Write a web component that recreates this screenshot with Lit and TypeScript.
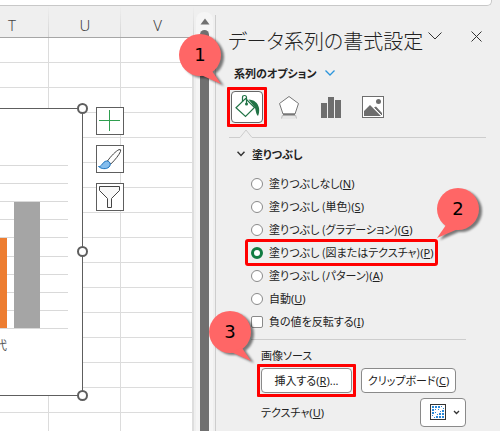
import { LitElement, html, css, svg } from "lit";
import { customElement, property, state } from "lit/decorators.js";
import { classMap } from "lit/directives/class-map.js";

const COLUMNS = ["T", "U", "V"];
const ROWS = 16;

const FILLS: { text: string; key: string }[] = [
  { text: "塗りつぶしなし", key: "N" },
  { text: "塗りつぶし (単色)", key: "S" },
  { text: "塗りつぶし (グラデーション)", key: "G" },
  { text: "塗りつぶし (図またはテクスチャ)", key: "P" },
  { text: "塗りつぶし (パターン)", key: "A" },
  { text: "自動", key: "U" },
];

// Texture swatch: x, y and side of each dot.
const DOTS: [number, number, number][] = [
  [0, 0, 2], [3, 0, 2], [0, 3, 2], [3, 3, 1], [6, 0, 2], [9, 0, 1], [0, 6, 2], [0, 9, 1], [6, 3, 1], [3, 6, 1],
  [10, 10, 2], [7, 10, 2], [4, 10, 2], [10, 7, 2], [7, 7, 2], [10, 4, 2], [2, 11, 1], [11, 2, 1], [5, 8, 1], [8, 5, 1],
];

@customElement("step-callout")
export class StepCallout extends LitElement {
  @property() label = "";
  @property() tail: "right" | "left" = "right";

  static styles = css`
    :host { display: block; width: 56px; height: 62px; pointer-events: none; }
    svg { display: block; }
    .bubble { fill: #ff6666; filter: drop-shadow(3px 2px 1px rgba(0, 0, 0, 0.5)); }
    text { font: 18px "DejaVu Sans", sans-serif; fill: #000; }
  `;

  render() {
    const tip = this.tail === "right"
      ? svg`<path d="M23 42 L43 51 L34 38 Z" />`
      : svg`<path d="M10 38 L1 51 L22 42 Z" />`;
    return html`<svg width="56" height="62" viewBox="0 0 56 62" aria-hidden="true">
      <g class="bubble"><circle cx="22" cy="22" r="21" />${tip}</g>
      <text x="22" y="28" text-anchor="middle">${this.label}</text>
    </svg>`;
  }
}

@customElement("sheet-view")
export class SheetView extends LitElement {
  static styles = css`
    :host {
      display: block; position: relative; overflow: hidden; flex: none; width: 194px;
      background: #fff; font-family: "Noto Sans CJK JP", sans-serif;
    }
    .grid {
      display: grid; height: 100%;
      grid-template-columns: 49px 72px 73px;
      grid-template-rows: 32px repeat(15, 25px) minmax(0, 1fr);
    }
    .head {
      display: flex; align-items: center; justify-content: center; box-sizing: border-box;
      padding-top: 6px;
      background: linear-gradient(#efefef, #d4d4d4) right / 1px 100% no-repeat #efefef;
      border-bottom: 1px solid #a6a6a6;
      font: 300 15px "Noto Sans", "Noto Sans CJK JP", sans-serif; color: #444;
    }
    .head.first { justify-content: flex-start; padding-left: 8px; }
    .cell { box-sizing: border-box; border-right: 1px solid #dcdcdc; border-bottom: 1px solid #dcdcdc; }
    .cell.edge { border-right: 2px solid #dedede; }
    .cell.last { border-bottom: 0; }
    .chart { position: absolute; left: 0; top: 102px; }
    .category { font: 12px "Noto Sans CJK JP", sans-serif; fill: #595959; }
    .tools { position: absolute; left: 96px; top: 101px; display: flex; flex-direction: column; gap: 10px; }
    .tool {
      width: 28px; height: 28px; padding: 0; box-sizing: border-box;
      background: #fff; border: 1px solid #5e5e5e;
    }
    .tool svg { display: block; }
  `;

  render() {
    const lines = Array.from({ length: 10 }, (_, i) => 57.5 + i * 18 + (i > 4 ? 1 : 0));
    return html`
      <div class="grid">
        ${COLUMNS.map((c, i) => html`<div class=${classMap({ head: true, first: i === 0 })}>${c}</div>`)}
        ${Array.from({ length: ROWS }, (_, r) => COLUMNS.map((_c, i) => html`
          <div class=${classMap({ cell: true, edge: i === 2, last: r === ROWS - 1 })}></div>`))}
      </div>
      <svg class="chart" width="84" height="288" viewBox="0 0 84 288" role="img" aria-label="グラフ">
        <path d="M-1 .5H82.500V287.500H-1Z" fill="#fff" stroke="#5e5e5e" />
        ${lines.map((y) => svg`<path d="M0 ${y}H68" stroke="#d9d9d9" />`)}
        <rect x="0" y="130" width="7" height="90" fill="#ed7d31" />
        <rect x="14" y="94" width="26" height="126" fill="#a5a5a5" />
        <text class="category" x="-5" y="242">代</text>
      </svg>
      <div class="tools">
        <button class="tool" aria-label="グラフ要素">
          <svg width="26" height="26" viewBox="0 0 26 26"><path d="M12.500 2v21M2 12.500h21" stroke="#2f9e4f" /></svg>
        </button>
        <button class="tool" aria-label="グラフ スタイル">
          <svg width="26" height="26" viewBox="0 0 26 26">
            <path d="M10.500 15 C14 10 19 5 22 3.600 Q24.500 3 23.500 5.500 C22 9 18 14 13.800 18 Z" fill="#fff" stroke="#444" />
            <path d="M1.500 20.500 C5 21 5.500 15.500 9.500 15 C13 15 14.500 18.500 12 21 C9.500 23.500 4 23 1.500 20.500Z" fill="#83bdee" stroke="#1a72bd" />
          </svg>
        </button>
        <button class="tool" aria-label="グラフ フィルター">
          <svg width="26" height="26" viewBox="0 0 26 26"><path d="M2.500 2.500h20v4l-8 8v9h-4v-9l-8-8z" fill="#f8f8f8" stroke="#444" /></svg>
        </button>
      </div>`;
  }
}

@customElement("app-root")
export class AppRoot extends LitElement {
  @state() private selected = 3;

  static styles = css`
    :host {
      display: flex; flex-direction: column; position: relative; overflow: hidden;
      min-height: 100vh; background: #efefef; color: #222;
      font: 11px/20px "Noto Sans CJK JP", sans-serif; font-feature-settings: "palt";
    }
    .formula {
      flex: none; height: 6px; box-sizing: border-box; margin-right: 8px; background: #fff;
      border: solid #c8c8c8; border-width: 0 1px 1px 0; border-radius: 0 0 5px 0;
    }
    .main { display: flex; flex: 1; }
    .scroll {
      flex: none; width: 21px; box-sizing: border-box; padding: 6px 2px 0; display: flex;
    }
    .track {
      flex: 1; display: flex; flex-direction: column; align-items: center; gap: 5px;
      background: #f5f5f5; border-radius: 8px 8px 0 0; padding-top: 6px;
    }
    .thumb { flex: 1; width: 9px; border-radius: 5px 5px 0 0; background: #707070; }
    .pane { flex: 1; min-width: 0; display: flex; flex-direction: column; margin-top: 9px; padding-top: 6px; border-left: 1px solid #cdcdcd; }
    svg { display: block; flex: none; }
    button { font: inherit; font-feature-settings: inherit; color: inherit; padding: 0; }
    .bare { background: none; border: 0; }
    .titlebar { display: flex; align-items: center; height: 40px; padding: 0 18px 0 12px; }
    h1 { margin: 0; font-size: 20px; font-weight: 300; line-height: 40px; white-space: nowrap; }
    .menu { margin-left: 5px; margin-bottom: 10px; }
    .close { margin-left: auto; margin-bottom: 10px; }
    .scope { display: flex; align-items: center; gap: 8px; height: 24px; margin-left: 18px; font-weight: 700; }
    .tabs { display: flex; align-items: center; gap: 10px; margin: 6px 0 0 15px; }
    .tab { width: 32px; height: 32px; box-sizing: border-box; display: flex; align-items: center; justify-content: center; }
    .tab.on { background: #fff; border: 1px solid #666; border-radius: 4px; }
    .marked { position: relative; }
    .marked::after { content: ""; position: absolute; inset: -5px; border: 3px solid #f00; border-radius: 1px; pointer-events: none; }
    .rule { display: flex; margin: 6px 14px 0 13px; height: 9px; }
    .rule i { box-sizing: border-box; border-bottom: 1px solid #cdcdcd; }
    .rule .before { width: 11px; }
    .rule .after { flex: 1; }
    h2 { display: flex; align-items: center; gap: 7px; margin: 6px 0 0 21px; font-size: 11px; line-height: 20px; font-weight: 700; }
    .fills { margin: 8px 0 0 35px; padding: 0; border: 0; display: flex; flex-direction: column; align-items: flex-start; }
    .choice { display: flex; align-items: center; gap: 6px; height: 23px; white-space: nowrap; }
    .choice.boxed { margin: 0 -4px; padding: 0 2px 0 4px; outline: 3px solid #f00; outline-offset: -1px; border-radius: 1px; z-index: 1; }
    .key { font-family: "Noto Sans", sans-serif; }
    input { appearance: none; box-sizing: border-box; flex: none; width: 12px; height: 12px; margin: 0; background: #fff; border: 1px solid #8a8a8a; }
    input[type="radio"] { border-radius: 50%; }
    input[type="radio"]:checked { border: 3px solid #107c41; }
    input[type="checkbox"] { border-radius: 2px; }
    .source { margin: 6px 34px 0 35px; border-top: 1px solid #cdcdcd; padding: 5px 0 0 10px; }
    .caption { margin: 0; line-height: 20px; }
    .buttons { display: flex; gap: 9px; margin-top: 3px; }
    .push { height: 25px; box-sizing: border-box; background: #fff; border: 1px solid #8a8a8a; border-radius: 4px; white-space: nowrap; }
    .insert { width: 91px; }
    .clip { width: 95px; }
    .texture { display: flex; align-items: center; justify-content: space-between; margin-top: 5px; }
    .picker { position: relative; width: 46px; height: 29px; }
    .picker select { appearance: none; width: 100%; height: 100%; margin: 0; background: #fff; border: 1px solid #8a8a8a; border-radius: 4px; }
    .picker svg { position: absolute; inset: 0; pointer-events: none; }
    .handle { position: absolute; left: 77px; width: 11px; height: 11px; box-sizing: border-box; border: 2px solid #5e5e5e; border-radius: 50%; background: #fff; }
    .handle.top { top: 103px; }
    .handle.middle { top: 246px; }
    .handle.bottom { top: 390px; }
    step-callout { position: absolute; z-index: 2; }
    .one { left: 178px; top: 33px; }
    .two { left: 436px; top: 187px; }
    .three { left: 208px; top: 310px; }
  `;

  private key(k: string) {
    return html`<span class="key">(<u>${k}</u>)</span>`;
  }

  render() {
    return html`
      <div class="formula"></div>
      <div class="main">
        <sheet-view></sheet-view>
        <div class="scroll"><div class="track">
          <svg width="10" height="7" viewBox="0 0 10 7"><path d="M5 .5 9.500 6.500H.5Z" fill="#707070" /></svg>
          <div class="thumb"></div>
        </div></div>
        <aside class="pane">
          <div class="titlebar">
            <h1>データ系列の書式設定</h1>
            <button class="bare menu" aria-label="作業ウィンドウ オプション">
              <svg width="14" height="8" viewBox="0 0 14 8"><path d="M.5.5 7 7 13.500.5" fill="none" stroke="#333" /></svg>
            </button>
            <button class="bare close" aria-label="閉じる">
              <svg width="11" height="11" viewBox="0 0 11 11"><path d="M.5.5l10 10M10.500.5l-10 10" stroke="#333" /></svg>
            </button>
          </div>
          <div class="scope">系列のオプション
            <svg width="10" height="6" viewBox="0 0 10 6"><path d="M.5.5 5 5 9.500.5" fill="none" stroke="#2b95dc" stroke-width="1.300" /></svg>
          </div>
          <div class="tabs">
            <button class="tab on marked" aria-label="塗りつぶしと線">
              <svg width="26" height="26" viewBox="0 0 26 26">
                <path d="M11.500 4.500 20.500 13.500 11.500 22.500 2 13.700Z" fill="#fff" stroke="#217346" stroke-width="1.200" />
                <path d="M8.500 8V3.500q0-2 2-2t2 2V10" fill="none" stroke="#217346" stroke-width="1.200" />
                <circle cx="12.500" cy="10" r="1.500" fill="#217346" />
                <path d="M14.500 5.500C20 5.500 24 9 25 14C25.500 17 25 20 24 22C21.500 20 22 15 20.500 13Z" fill="#217346" />
              </svg>
            </button>
            <button class="tab bare" aria-label="効果">
              <svg width="22" height="26" viewBox="0 0 22 26">
                <path d="M4.500 21h13v4h-14z" fill="#e6e6e6" /><path d="M4.500 21 3.500 24.500M17.500 21l1 3.500" stroke="#bbb" />
                <path d="M11 2.500 20.500 9.500 17 20H5L1.500 9.500Z" fill="#fff" stroke="#777" />
                <path d="M5 20.500h12" stroke="#777" stroke-width="2" />
              </svg>
            </button>
            <button class="tab bare" aria-label="系列のオプション">
              <svg width="20" height="22" viewBox="0 0 20 22"><path d="M0 7h6v15H0zM7 1h6v21H7zM14 4h6v18h-6z" fill="#6e6e6e" /></svg>
            </button>
            <button class="tab bare" aria-label="図">
              <svg width="22" height="22" viewBox="0 0 22 22">
                <rect x=".5" y=".5" width="21" height="21" fill="#fff" stroke="#6e6e6e" />
                <circle cx="16.500" cy="5.500" r="2.500" fill="#6e6e6e" />
                <path d="M2 20v-5l6-6 11 11zM12 11.500 14 10.500 20 17v3z" fill="#6e6e6e" />
                <path d="M11 11l9 9" stroke="#fff" />
              </svg>
            </button>
          </div>
          <div class="rule">
            <i class="before"></i>
            <svg width="12" height="9" viewBox="0 0 12 9"><path d="M0 8.500 6 1l6 7.500" fill="none" stroke="#cdcdcd" /></svg>
            <i class="after"></i>
          </div>
          <h2>
            <svg width="8" height="6" viewBox="0 0 8 6"><path d="M.5.7 4 4.500 7.500.7" fill="none" stroke="#333" stroke-width="1.500" /></svg>
            塗りつぶし
          </h2>
          <fieldset class="fills">
            ${FILLS.map((f, i) => html`
              <label class=${classMap({ choice: true, boxed: i === 3 })}>
                <input type="radio" name="fill" .checked=${this.selected === i} @change=${() => (this.selected = i)} />
                <span>${f.text}${this.key(f.key)}</span>
              </label>`)}
            <label class="choice"><input type="checkbox" /><span>負の値を反転する${this.key("I")}</span></label>
          </fieldset>
          <section class="source">
            <p class="caption">画像ソース</p>
            <div class="buttons">
              <button class="push insert marked">挿入する${this.key("R")}<span class="key">...</span></button>
              <button class="push clip">クリップボード${this.key("C")}</button>
            </div>
            <div class="texture">
              <label for="texture">テクスチャ${this.key("U")}</label>
              <div class="picker">
                <select id="texture"><option></option></select>
                <svg width="46" height="29" viewBox="0 0 46 29">
                  <rect x="10.500" y="6.500" width="15" height="15" fill="#fff" stroke="#333" />
                  ${DOTS.map(([x, y, s]) => svg`<rect x=${12 + x} y=${8 + y} width=${s} height=${s} fill="#2b88d8" />`)}
                  <path d="M34 13l2.500 2.500L39 13" fill="none" stroke="#333" stroke-width="1.300" />
                </svg>
              </div>
            </div>
          </section>
        </aside>
      </div>
      <span class="handle top"></span>
      <span class="handle middle"></span>
      <span class="handle bottom"></span>
      <step-callout class="one" label="1"></step-callout>
      <step-callout class="two" label="2" tail="left"></step-callout>
      <step-callout class="three" label="3"></step-callout>`;
  }
}
